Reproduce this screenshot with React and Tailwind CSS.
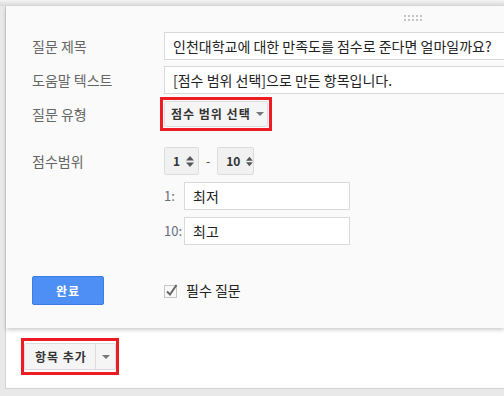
import React from "react";

const font = { fontFamily: '"Noto Sans CJK KR", "Noto Sans", sans-serif' };

const Caret = ({ className = "" }) => (
  <svg width="8" height="4" viewBox="0 0 8 4" className={className}>
    <path d="M0 0 L8 0 L4 4 Z" fill="#777" />
  </svg>
);

const Spin = () => (
  <svg width="8" height="11" viewBox="0 0 8 11">
    <path d="M0 4.5 L8 4.5 L4 0 Z" fill="#555" />
    <path d="M0 6.5 L8 6.5 L4 11 Z" fill="#555" />
  </svg>
);

const SpinBox = ({ value, width }) => (
  <div
    className={`flex items-center gap-[6px] h-[28px] ${width} pl-[8px] bg-[#f1f1f1] border border-[#dcdcdc] rounded-[2px] text-[12px] font-bold text-[#333]`}
  >
    <span>{value}</span>
    <Spin />
  </div>
);

const Label = ({ children }) => (
  <div className="w-[132px] shrink-0 text-[14px] text-[#666]">{children}</div>
);

const TextBox = ({ value, className = "" }) => (
  <div
    className={`h-[28px] flex items-center pl-[8px] bg-white border border-[#d9d9d9] text-[14px] text-[#222] whitespace-nowrap ${className}`}
  >
    {value}
  </div>
);

export default function App() {
  return (
    <div
      style={font}
      className="w-[504px] h-[396px] overflow-hidden pl-[5px] pt-[6px] bg-[linear-gradient(to_bottom,#f4f4f4,#d9d9d9_6px,#e9e9e9_6px)]"
    >
      <div className="h-[383px] bg-white border-l border-b border-[#d3d3d3]">
        {/* question card */}
        <div className="h-[322px] bg-[#fafafa] shadow-[0_2px_4px_rgba(0,0,0,0.2)] overflow-hidden pl-[26px]">
          {/* drag handle */}
          <div className="h-[26px] pt-[9px] pl-[372px]">
            <div className="grid grid-cols-5 gap-[2px] w-[18px]">
              {Array.from({ length: 10 }).map((_, i) => (
                <div key={i} className="w-[2px] h-[2px] bg-[#c4c4c4]" />
              ))}
            </div>
          </div>

          <div className="flex items-center">
            <Label>질문 제목</Label>
            <TextBox value="인천대학교에 대한 만족도를 점수로 준다면 얼마일까요?" className="w-[360px] shrink-0" />
          </div>

          <div className="flex items-center mt-[6px]">
            <Label>도움말 텍스트</Label>
            <TextBox value="[점수 범위 선택]으로 만든 항목입니다." className="w-[360px] shrink-0" />
          </div>

          <div className="flex items-center mt-[3px]">
            <Label>질문 유형</Label>
            <div className="ml-[-4px] border-[3px] border-[#ed1c24] p-px">
              <div className="w-[104px] h-[26px] flex items-center gap-[5px] pl-[6px] bg-[#f5f5f5] border border-[#dcdcdc] rounded-[2px] text-[12px] font-bold tracking-[1px] text-[#333] whitespace-nowrap">
                <span>점수 범위 선택</span>
                <Caret />
              </div>
            </div>
          </div>

          <div className="flex mt-[16px]">
            <div className="w-[132px] shrink-0 h-[28px] flex items-center text-[14px] text-[#666]">
              점수범위
            </div>
            <div className="flex flex-col">
              <div className="flex items-center">
                <SpinBox value="1" width="w-[35px]" />
                <span className="mx-[7px] text-[12px] text-[#333]">-</span>
                <SpinBox value="10" width="w-[37px]" />
              </div>
              <div className="flex items-center mt-[7px]">
                <span className="w-[20px] text-[13px] text-[#6b6b80]">1:</span>
                <TextBox value="최저" className="w-[166px]" />
              </div>
              <div className="flex items-center mt-[7px]">
                <span className="w-[20px] text-[13px] text-[#6b6b80]">10:</span>
                <TextBox value="최고" className="w-[166px]" />
              </div>
            </div>
          </div>

          <div className="flex items-center mt-[31px]">
            <div className="w-[132px] shrink-0">
              <div className="w-[72px] h-[29px] flex items-center justify-center rounded-[2px] bg-[#4d8ff5] border border-[#3b7de6] text-white text-[12px] font-bold tracking-[1px]">
                완료
              </div>
            </div>
            <div className="flex items-center gap-[8px]">
              <svg width="14" height="14" viewBox="0 0 14 14">
                <rect x="0.5" y="1.5" width="12" height="12" fill="#f8f8f8" stroke="#c6c6c6" />
                <path d="M3 7.5 L6 10.5 L12.5 1" fill="none" stroke="#666" strokeWidth="2" />
              </svg>
              <span className="text-[14px] text-[#222]">필수 질문</span>
            </div>
          </div>
        </div>

        {/* add item */}
        <div className="mt-[10px] ml-[15px] w-[98px] border-[3px] border-[#ed1c24] py-[2px]">
          <div className="h-[27px] flex bg-[#f5f5f5] border border-[#dcdcdc] rounded-[2px] text-[12px] font-bold tracking-[1px] text-[#333] whitespace-nowrap">
            <div className="flex items-center pl-[10px] w-[71px] border-r border-[#dcdcdc]">
              항목 추가
            </div>
            <div className="flex-1 flex items-center justify-center">
              <Caret />
            </div>
          </div>
        </div>
      </div>
    </div>
  );
}
